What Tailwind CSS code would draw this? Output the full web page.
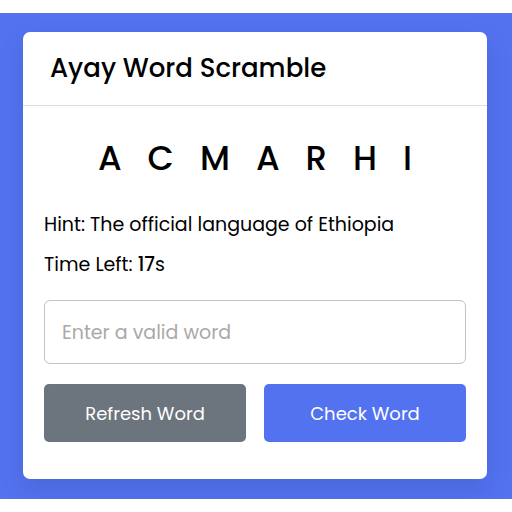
<!DOCTYPE html>
<html lang="en">
<head>
<meta charset="utf-8">
<meta name="viewport" content="width=device-width, initial-scale=1">
<title>Ayay Word Scramble</title>
<script src="https://cdn.jsdelivr.net/npm/@tailwindcss/browser@4"></script>
</head>
<body class="bg-white py-[13px] font-['Poppins','Inter',sans-serif] text-black">
<div class="overflow-hidden bg-[#5372f0] pt-[19px] pr-[25px] pb-5 pl-[23px]">
  <main class="rounded-[7px] bg-white shadow-[0_10px_26px_rgba(0,0,0,0.1)]">
    <h1 class="border-b border-[#dddddd] px-[27px] py-4 text-[26px] leading-[41px] font-medium">Ayay Word Scramble</h1>
    <form class="px-[21px] pt-[27px] pb-[37px]" onsubmit="return false">
      <p class="flex justify-center gap-[26px] text-[34px] leading-[50px] font-medium" aria-label="Scrambled word">
        <span>A</span><span>C</span><span>M</span><span>A</span><span>R</span><span>H</span><span>I</span>
      </p>
      <p class="mt-[27px] text-[19px] leading-[30px]">Hint: <span>The official language of Ethiopia</span></p>
      <p class="mt-[10px] text-[19px] leading-[30px]">Time Left: <b class="font-medium">17</b>s</p>
      <input type="text" aria-label="Enter a valid word" placeholder="Enter a valid word" class="mt-5 block h-16 w-full rounded-[6px] border border-[#c4c4c4] px-[17px] text-[19px] outline-none placeholder:text-[#a9a9a9]">
      <div class="mt-5 grid grid-cols-2 gap-[18px] text-[18px] text-white">
        <button type="button" class="h-[58px] rounded-[5px] bg-[#6c757d]">Refresh Word</button>
        <button type="submit" class="h-[58px] rounded-[5px] bg-[#5372f0]">Check Word</button>
      </div>
    </form>
  </main>
</div>
</body>
</html>
